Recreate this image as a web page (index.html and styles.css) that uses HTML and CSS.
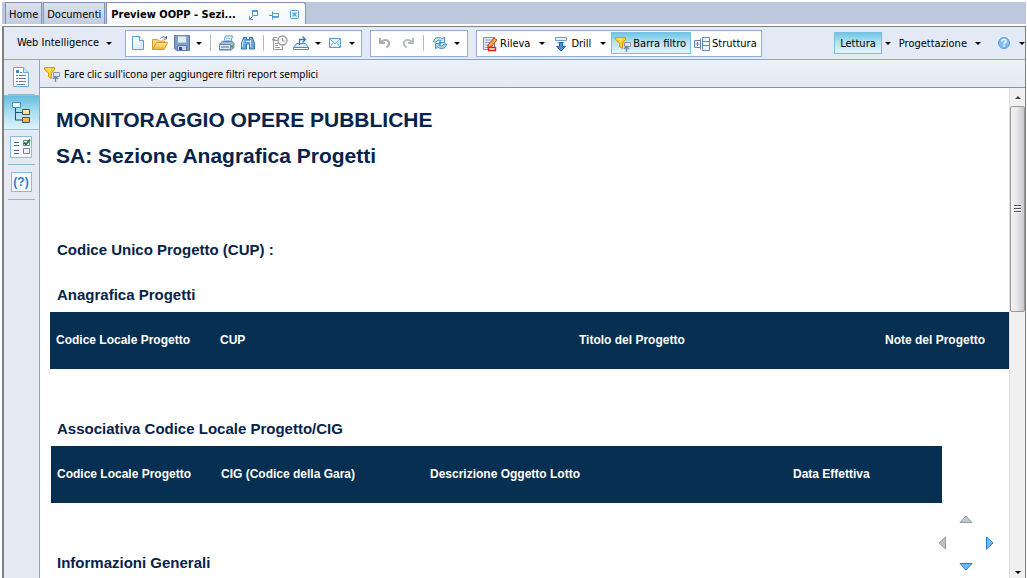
FILE: index.html
```html
<!DOCTYPE html>
<html lang="it">
<head>
<meta charset="utf-8">
<title>Preview OOPP - Sezione Anagrafica Progetti</title>
<link rel="stylesheet" href="styles.css">
</head>
<body>
<svg class="defs" aria-hidden="true">
  <defs>
    <linearGradient id="blue" x1="0" y1="0" x2="1" y2="1"><stop offset="0" stop-color="#fff"/><stop offset="1" stop-color="#cfe6f9"/></linearGradient>
    <linearGradient id="gold" x1="0" y1="0" x2="0" y2="1"><stop offset="0" stop-color="#fff0a8"/><stop offset="1" stop-color="#f0ae2c"/></linearGradient>
    <symbol id="funnel" viewBox="0 0 16 16">
      <path d="M9.500 6.500h6v4h-6z" fill="#dde5f2" stroke="#8493b3"/>
      <path d="M.5 1.500h10v2L7.500 7v5.500l-3-2V7l-4-3.500z" fill="#ffcf2e" stroke="#dc9500"/>
      <path d="M2.500 3h4l-1 3" fill="none" stroke="#fff3a0"/>
      <path d="M11.500 16v-5M9 13l2.500-2.500L14 13" fill="none" stroke="#6f82a8" stroke-width="1.300"/>
    </symbol>
  </defs>
</svg>
<div class="app">
  <nav class="tabs">
    <button class="tab">Home</button>
    <button class="tab">Documenti</button>
    <div class="tab tab-active">
      <span class="tab-title">Preview OOPP - Sezi...</span>
      <button class="tab-tool" aria-label="Apri in nuova finestra"><svg width="10" height="10" viewBox="0 0 10 10" fill="none" stroke="#4f9cd3"><path d="M3.500 1v4.500h5v-5h-5z" fill="#fff"/><path d="M3 1h6" stroke-width="2"/><path d="M.5 6v3.500H4M.5 9.500L4 6"/></svg></button>
      <button class="tab-tool" aria-label="Fissa"><svg width="10" height="10" viewBox="0 0 10 10" fill="none" stroke="#4f9cd3"><path d="M0 5.500h3M3.500 1.500v8M4 3.500h5.500v3H4" /><path d="M4 7h6" stroke-width="1.500"/></svg></button>
      <button class="tab-tool" aria-label="Chiudi"><svg width="10" height="10" viewBox="0 0 10 10" fill="none" stroke="#4f9cd3"><rect x="1.500" y=".5" width="8" height="8" rx="1" fill="#eef7fd"/><path d="M3.500 2.500l4 4M7.500 2.500l-4 4" stroke-width="1.300"/></svg></button>
    </div>
  </nav>
  <div class="frame">
    <div class="toolbar">
      <button class="menu">Web Intelligence <i class="caret"></i></button>
      <div class="group group-file">
        <button class="tool" aria-label="Nuovo"><svg width="16" height="16" viewBox="0 0 16 16"><path d="M2.500 1.500h7l4 4v9h-11z" fill="url(#blue)" stroke="#5b9bd3"/><path d="M9.500 1.500v4h4" fill="#fff" stroke="#5b9bd3"/></svg></button>
        <button class="tool" aria-label="Apri"><svg width="18" height="16" viewBox="0 0 18 16"><path d="M1.500 14.500v-10h5l1 1.500h6v2" fill="#fbd878" stroke="#d99a2b"/><path d="M1.500 14.500l4-7h11l-3.500 7z" fill="url(#gold)" stroke="#d99a2b"/><path d="M9.500 3.500q3-3.500 6 0M15.500 1v3h-3" fill="none" stroke="#4a6fa5"/></svg></button>
        <button class="tool" aria-label="Salva"><svg width="16" height="16" viewBox="0 0 16 16"><path d="M.5.5h15v15h-13l-2-2z" fill="#7d9dcb" stroke="#5b78aa"/><path d="M3.500 1h9v7h-9z" fill="#e4edf7" stroke="#8aa4cb"/><path d="M3.500 10.500h9v5h-9z" fill="#cbd3df" stroke="#5f7aa8"/><path d="M5 12h3v3H5z" fill="#36507e"/></svg></button>
        <button class="drop" aria-label="Opzioni di salvataggio"><i class="caret"></i></button>
        <span class="sep"></span>
        <button class="tool" aria-label="Stampa"><svg width="17" height="16" viewBox="0 0 17 16"><path d="M5.500 7.500l2-6.500h7l-2 6.500z" fill="#fff" stroke="#4e95cf"/><path d="M8 3.500h4.500M7.500 5.500H12" stroke="#8fbfe4"/><path d="M1.500 9l3-2.500h10l1.500 2v4l-3 2.500h-11.500z" fill="#a7b8cf" stroke="#5e7ba3"/><path d="M1.500 9.500h11v5h-11z" fill="#dce6f1" stroke="#6b8bb5"/><path d="M3 12h8" stroke="#54749c"/><path d="M13 10.500h2v2h-2z" fill="#10c51c"/></svg></button>
        <button class="tool" aria-label="Trova"><svg width="14" height="14" viewBox="1 1 14 14"><path d="M3.500 2.500h3v2h3v-2h3l2 6v5.500h-5V9h-3v5h-5V8.500z" fill="#6aa9dd" stroke="#2f74b5"/><path d="M3.500 5l-1 4v3M10.500 5v7M6 6.500h4" stroke="#d5eafa" fill="none"/></svg></button>
        <span class="sep"></span>
        <button class="tool" aria-label="Cronologia"><svg width="17" height="16" viewBox="0 0 17 16" fill="none" stroke="#999"><path d="M7 5.500H2.500v9h9V11M4 8.500h3M4 10.500h3M4 12.500h5"/><path d="M6 2.500H2.500v3M1 4l1.500 2L4 4"/><circle cx="11.500" cy="5.500" r="4.500" fill="#f4f4f4" stroke-width="1.300"/><path d="M11.500 3v3H14"/></svg></button>
        <button class="tool" aria-label="Esporta"><svg width="16" height="16" viewBox="0 0 16 16"><path d="M3.500 8.500h9l3 4h-15z" fill="#d5e6f7" stroke="#4d8ac8"/><path d="M.5 12.500h15v2H.5z" fill="#fff" stroke="#4d8ac8"/><path d="M6.500 10V4.500h5M9.500 1.500l3 3-3 3" fill="none" stroke="#3a75b5" stroke-width="1.300"/></svg></button>
        <button class="drop" aria-label="Opzioni di esportazione"><i class="caret"></i></button>
        <button class="tool" aria-label="Invia"><svg width="14" height="12" viewBox="0 0 14 12" fill="none" stroke="#5a9bd5"><path d="M1.500 1.500h11v9h-11z" fill="#e9f4fd"/><path d="M1.500 1.500L7 7l5.500-5.500M1.500 10.500l4-5M12.500 10.500l-4-5" stroke="#79b2e2"/></svg></button>
        <button class="drop" aria-label="Opzioni di invio"><i class="caret"></i></button>
      </div>
      <div class="group group-edit">
        <button class="tool" aria-label="Annulla"><svg width="14" height="14" viewBox="0 0 14 14"><path d="M2 2v5h5M2.500 6.500q3-3.500 7-2 4 3-1 7" fill="none" stroke="#a3abb5" stroke-width="2"/></svg></button>
        <button class="tool" aria-label="Ripeti"><svg width="14" height="14" viewBox="0 0 14 14"><path d="M12 2v5H7M11.500 6.500q-3-3.500-7-2-4 3 1 7" fill="none" stroke="#b5bac0" stroke-width="2"/></svg></button>
        <span class="sep"></span>
        <button class="tool" aria-label="Aggiorna"><svg width="16" height="16" viewBox="0 0 16 16" stroke="#3d91ce" stroke-linejoin="round"><path d="M1.500 7q.5-4.500 5-4.500 2.500 0 4 1.500l2-2v5.500H7L9 5.500q-3.500-1.500-5 1.500z" fill="#d3ecfb"/><path d="M14.500 9q-.5 4.500-5 4.500-2.500 0-4-1.500l-2 2V8.500H9L7 10.500q3.500 1.500 5-1.500z" fill="#a5d6f5"/></svg></button>
        <button class="drop" aria-label="Opzioni di aggiornamento"><i class="caret"></i></button>
      </div>
      <div class="group group-view">
        <button class="action"><svg width="16" height="16" viewBox="0 0 16 16"><path d="M1.500 1.500h11v12h-11z" fill="#e4eefa" stroke="#6c94c6"/><path d="M3 4h8M3 6.500h6M3 9h4M3 11.500h3" stroke="#7ba5d8"/><path d="M6 9l6-7 3 2-6 7-3 1z" fill="#f6a14e" stroke="#c8451b"/><path d="M6.500 11.500h7v3h-7z" fill="#fff" stroke="#e51b17" stroke-width="1.500"/></svg>Rileva</button>
        <button class="drop drop-wide" aria-label="Opzioni Rileva"><i class="caret"></i></button>
        <button class="action"><svg width="16" height="16" viewBox="-1 0 16 16"><path d="M1.500 1.500h11v3h-11z" fill="#e6f1fb" stroke="#6a9fd2"/><path d="M3.500 6.500h7" stroke="#6a9fd2"/><path d="M5.500 6.500h3v4h3L7 15l-4.500-4.500h3z" fill="#4d8fd0" stroke="#28619f"/></svg>Drill</button>
        <button class="drop drop-wide" aria-label="Opzioni Drill"><i class="caret"></i></button>
        <button class="action pressed" aria-pressed="true"><svg width="16" height="16"><use href="#funnel"/></svg>Barra filtro</button>
        <button class="action"><svg width="16" height="16" viewBox="0 0 16 16" fill="none" stroke="#6a85b3"><path d="M8.500 1.500h7v13h-7zM8.500 5.500h7M8.500 9.500h7" fill="#eef4fb"/><path d="M.5 4.500h6v7h-6zM3.500 6v4M1.500 8h4M6.500 2.500v11"/></svg>Struttura</button>
      </div>
      <div class="modes">
        <button class="mode pressed" aria-pressed="true">Lettura</button>
        <button class="drop" aria-label="Opzioni Lettura"><i class="caret"></i></button>
        <button class="mode">Progettazione</button>
        <button class="drop" aria-label="Opzioni Progettazione"><i class="caret"></i></button>
        <button class="tool help" aria-label="Guida"><svg width="12" height="12" viewBox="0 0 12 12"><circle cx="6" cy="6" r="5.500" fill="#7fbdf0" stroke="#5b9bd8"/><path d="M4 4.500q0-2 2-2t2 1.700q0 1-1 1.500-1 .4-1 1.500M6 8.300v1.500" fill="none" stroke="#fff" stroke-width="1.500"/></svg></button>
        <button class="drop drop-end" aria-label="Opzioni Guida"><i class="caret"></i></button>
      </div>
    </div>
    <div class="workspace">
      <aside class="rail">
        <button class="rail-item" aria-label="Riepilogo documento"><svg width="18" height="22" viewBox="0 0 18 22"><path d="M1.500 1.500h10l5 5v14h-15z" fill="#fff" stroke="#6aa9de"/><path d="M11.500 1.500v5h5" fill="#cfe6f8" stroke="#6aa9de"/><path d="M4 4h3v3H4z" fill="#3f86c8"/><path d="M8 6.500h2M4 9.500h2M7 9.500h7M4 12.500h2M7 12.500h7M4 15.500h2M7 15.500h7M5 18.500h8" stroke="#5f7fa8"/></svg></button>
        <button class="rail-item rail-active" aria-label="Mappa di navigazione"><svg width="20" height="22" viewBox="0 0 20 22"><path d="M4.500 7v12H12M4.500 11.500H12" fill="none" stroke="#1d4f7c"/><path d="M1.500 1.500h8v5h-8z" fill="#eef8ff" stroke="#3e92cd"/><path d="M11.500 8.500h7v5h-7zM11.500 16.500h7v5h-7z" fill="url(#gold)" stroke="#4a5058"/></svg></button>
        <button class="rail-item" aria-label="Controlli di input"><svg width="22" height="22" viewBox="0 0 22 22"><path d="M.5.5h21v21H.5z" fill="#f8fbff" stroke="#8eb6ea"/><path d="M4 6.500h5M4 9.500h5M4 14.500h5M4 17.500h5" stroke="#4a6792"/><path d="M13.500 4.500h6v5h-6zM13.500 12.500h6v5h-6z" fill="#f0f3f7" stroke="#74849b"/><path d="M14 6.500l2 2 4-5" fill="none" stroke="#187a3b" stroke-width="1.800"/></svg></button>
        <button class="rail-item" aria-label="Prompt utente"><span class="prompt">(?)</span></button>
      </aside>
      <main class="content">
        <button class="filterbar"><svg width="16" height="16"><use href="#funnel"/></svg>Fare clic sull'icona per aggiungere filtri report semplici</button>
        <div class="viewport">
          <article class="report">
            <h1>MONITORAGGIO OPERE PUBBLICHE</h1>
            <h1>SA: Sezione Anagrafica Progetti</h1>
            <h2 class="cup">Codice Unico Progetto (CUP) :</h2>
            <h2>Anagrafica Progetti</h2>
            <table class="grid grid-projects">
              <colgroup><col class="c-code"><col class="c-cup"><col class="c-title"><col></colgroup>
              <thead><tr><th>Codice Locale Progetto</th><th>CUP</th><th>Titolo del Progetto</th><th>Note del Progetto</th></tr></thead>
            </table>
            <h2>Associativa Codice Locale Progetto/CIG</h2>
            <table class="grid grid-cig">
              <colgroup><col class="c-code"><col class="c-cig"><col class="c-lot"><col class="c-date"></colgroup>
              <thead><tr><th>Codice Locale Progetto</th><th>CIG (Codice della Gara)</th><th>Descrizione Oggetto Lotto</th><th>Data Effettiva</th></tr></thead>
            </table>
            <h2>Informazioni Generali</h2>
          </article>
          <div class="scrollbar">
            <button class="scroll-btn" aria-label="Scorri su"><i class="caret caret-up"></i></button>
            <div class="thumb"><i class="grip"></i></div>
            <button class="scroll-btn scroll-down" aria-label="Scorri giù"><i class="caret"></i></button>
          </div>
          <div class="pad">
            <button class="pad-up" aria-label="Su"><svg width="14" height="8" viewBox="0 0 14 8"><path d="M1 7.500L7 1l6 6.500z" fill="#c3cad3" stroke="#929ba8"/></svg></button>
            <button class="pad-left" aria-label="Sinistra"><svg width="8" height="14" viewBox="0 0 8 14"><path d="M7.500 1L1 7l6.500 6z" fill="#b9c2cd" stroke="#929ba8"/></svg></button>
            <button class="pad-right" aria-label="Destra"><svg width="8" height="14" viewBox="0 0 8 14"><path d="M.5 1L7 7 .5 13z" fill="#6cbcff" stroke="#2c78c9"/></svg></button>
            <button class="pad-down" aria-label="Giù"><svg width="14" height="8" viewBox="0 0 14 8"><path d="M1 .5L7 7l6-6.500z" fill="#6cbcff" stroke="#2c78c9"/></svg></button>
          </div>
        </div>
      </main>
    </div>
  </div>
</div>
</body>
</html>
```
FILE: styles.css
```css
* { box-sizing: border-box; }

body {
  margin: 0;
  color: #000;
  font: 11px/14px "DejaVu Sans Condensed", "Noto Sans", sans-serif;
}

button {
  display: flex;
  align-items: center;
  justify-content: center;
  padding: 0;
  border: 0;
  background: none;
  color: inherit;
  font: inherit;
  white-space: nowrap;
}

svg { display: block; flex: none; }

.defs { position: absolute; width: 0; height: 0; }

.app {
  display: flex;
  flex-direction: column;
  height: 100vh;
  padding: 2px 1px 0 2px;
  background: #fff;
}

/* Tab strip */
.tabs {
  display: flex;
  gap: 1px;
  height: 22px;
  flex: none;
  padding-left: 3px;
  background: #bec8dc;
}

.tab {
  display: flex;
  align-items: center;
  padding: 2px 3px 0;
  border: 1px solid #7f91b5;
  border-bottom: 0;
  background: linear-gradient(#dbe2ee, #c3cde0);
}

.tab-active {
  gap: 10px;
  width: 200px;
  padding: 2px 6px 0 4px;
  border-radius: 0 3px 0 0;
  background: linear-gradient(#fff, #f4f7fb);
}

.tab-title { flex: 1; font-weight: bold; white-space: nowrap; }

/* Framed application area */
.frame {
  display: flex;
  flex: 1;
  flex-direction: column;
  min-height: 0;
  margin-top: 2px;
  border: solid #808080;
  border-width: 1px 1px 0 2px;
}

.toolbar {
  display: flex;
  align-items: center;
  flex: none;
  height: 33px;
  border-bottom: 1px solid #8fa5c8;
  background: #e4eaf5;
}

.menu { gap: 7px; width: 121px; }

.caret {
  width: 0;
  height: 0;
  border: solid transparent;
  border-width: 3px 3px 0;
  border-top-color: #000;
}

.caret-up { border-width: 0 3px 3px; border-bottom-color: #444; }

.group {
  display: flex;
  align-items: center;
  height: 27px;
  margin-right: 8px;
  border: 1px solid #96afd0;
  background: #fff;
}

.group-file { padding: 0 3px 0 1px; }
.group-edit { padding: 0 4px 0 2px; }
.group-view { padding-left: 2px; }

.tool { width: 22px; height: 22px; }
.group-file .drop + .sep { margin-left: 5px; }
.drop { width: 12px; height: 22px; }
.group-edit .tool { width: 23px; }
.drop-wide { width: 16px; }

.sep {
  width: 1px;
  height: 16px;
  margin: 0 4px;
  background: #a6bcd6;
}

.action {
  gap: 2px;
  height: 22px;
  padding: 1px 4px 0 3px;
}

.pressed {
  border: 1px solid #7cc0e0;
  background: linear-gradient(#6dc5e6, #b4e1f3 45%, #e2f5fc);
}

.modes {
  display: flex;
  align-items: center;
  margin-left: auto;
}

.mode { height: 22px; padding: 1px 5px 0; }
.help { margin-left: 9px; }
.drop-end { width: 10px; justify-content: flex-end; }

/* Side rail */
.workspace { display: flex; flex: 1; min-height: 0; }

.rail {
  flex: none;
  width: 36px;
  border-right: 1px solid #8fa5c8;
  background: #e4e9f2;
}

.rail-item {
  width: 100%;
  height: 35px;
  padding: 0 1px 2px 0;
  background: linear-gradient(#8db9d1, #8db9d1) bottom / 27px 1px no-repeat;
}

.rail-active {
  border: solid #8cc3dc;
  border-width: 1px 0;
  background: linear-gradient(#67bcdd, #a6dbf0 45%, #dcf3fb);
}

.prompt {
  width: 21px;
  border: 1px solid #8eb6ea;
  background: #f8fbff;
  color: #2c7fca;
  font: bold 12px/18px "Liberation Sans", sans-serif;
}

/* Content */
.content {
  display: flex;
  flex: 1;
  flex-direction: column;
  min-width: 0;
}

.filterbar {
  justify-content: flex-start;
  gap: 4px;
  flex: none;
  height: 28px;
  padding-left: 4px;
  border-bottom: 1px solid #7c92b8;
  background: linear-gradient(#edf1f7, #e3e8f2);
  font: 10px/14px "Noto Sans", sans-serif;
}

.viewport {
  position: relative;
  display: flex;
  flex: 1;
  min-height: 0;
}

.report {
  flex: 1;
  min-width: 0;
  overflow: hidden;
  padding: 14px 0 0 10px;
  background: #fff;
  color: #072349;
  font-family: "Liberation Sans", Arial, sans-serif;
}

.report h1 {
  margin: 0 0 0 6px;
  font-size: 21px;
  line-height: 36px;
}

.report h2 {
  margin: 0 0 0 7px;
  font-size: 15px;
  line-height: 34px;
}

.report .cup { margin: 59px 0 11px 7px; }

.grid {
  width: 100%;
  height: 57px;
  margin-bottom: 43px;
  border-collapse: collapse;
  table-layout: fixed;
  background: #072f52;
  color: #fff;
  font-size: 12px;
}

.grid th { padding: 0 6px 2px; text-align: left; }

.grid-cig { width: 891px; margin-left: 1px; }

.c-code { width: 164px; }
.c-cup { width: 359px; }
.c-title { width: 306px; }
.c-cig { width: 209px; }
.c-lot { width: 363px; }
.c-date { width: 155px; }

/* Scrollbar */
.scrollbar {
  display: flex;
  flex: none;
  flex-direction: column;
  width: 16px;
  border-left: 1px solid #e0e0e0;
  background: #f0f0f0;
}

.scroll-btn { flex: none; width: 100%; height: 18px; }
.scroll-down { height: 12px; margin-top: auto; }

.thumb {
  display: flex;
  align-items: center;
  justify-content: center;
  height: 42%;
  border: 1px solid #979797;
  border-radius: 2px;
  background: linear-gradient(90deg, #f4f4f4, #e8e8ea 45%, #c8c8ce);
}

.grip {
  width: 7px;
  height: 8px;
  background: repeating-linear-gradient(#555 0 1px, #fff 1px 2px, transparent 2px 3px);
}

/* Page navigation pad floating over the report */
.pad {
  position: absolute;
  right: 31px;
  bottom: 7px;
  display: grid;
  grid-template: 8px 40px 8px / 8px 40px 8px;
  place-items: center;
}

.pad-up { grid-area: 1 / 2; }
.pad-left { grid-area: 2 / 1; }
.pad-right { grid-area: 2 / 3; }
.pad-down { grid-area: 3 / 2; }
```
